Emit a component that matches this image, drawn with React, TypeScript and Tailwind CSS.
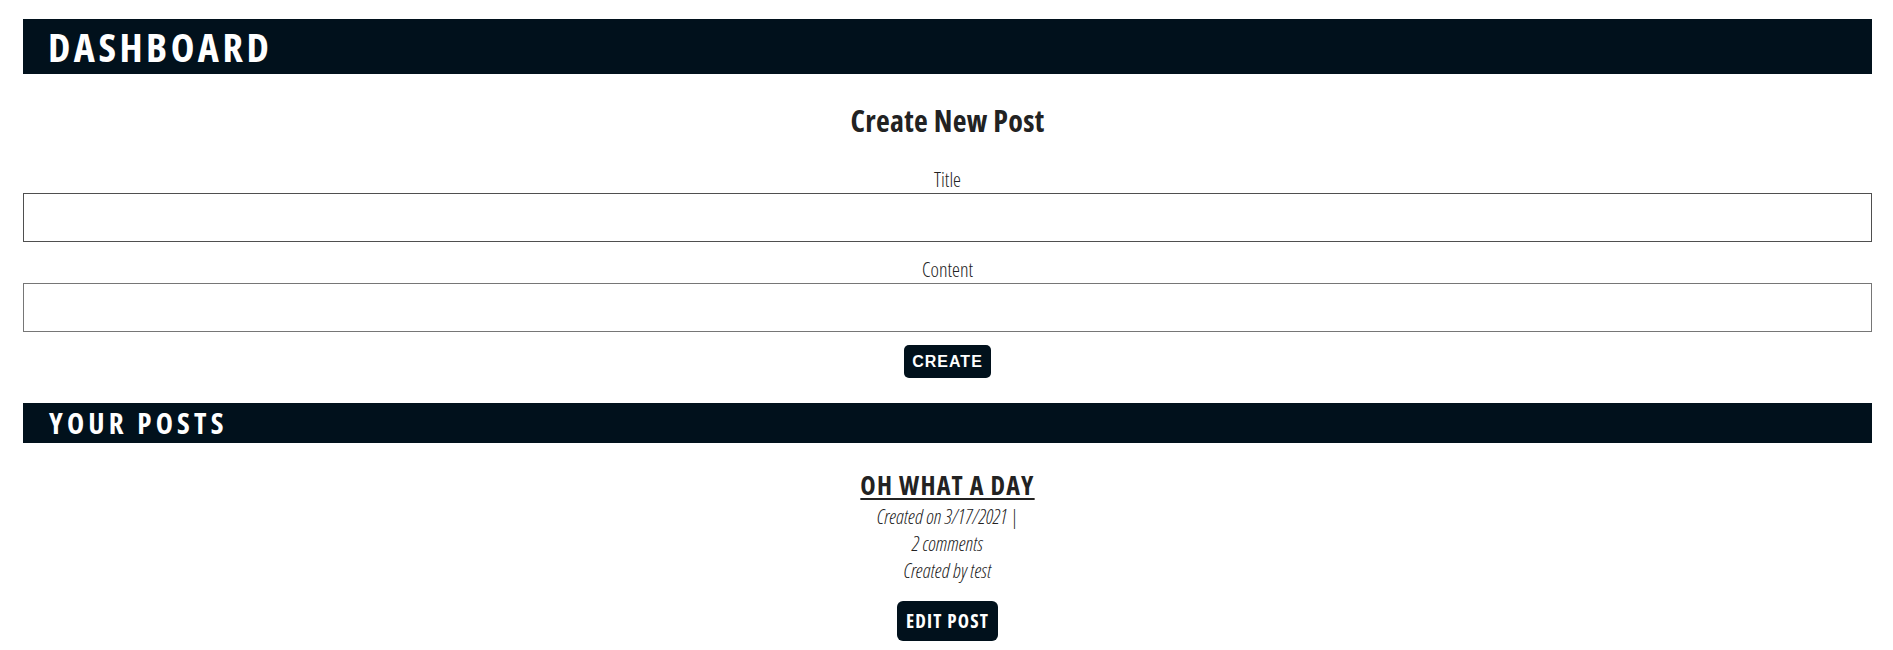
export default function App() {
  return (
    <div className="min-h-[650px] bg-white pl-[23px] pr-[21px] pt-[19px] text-[#222] font-['Open_Sans',sans-serif] font-stretch-condensed">
      <header className="flex h-[55px] items-center bg-[#01111c] pl-[25px]">
        <h1 className="text-[40px] leading-[55px] font-bold tracking-[3.5px] text-white">DASHBOARD</h1>
      </header>

      <section className="flex flex-col items-center">
        <h2 className="mt-[27px] text-[30px] leading-[40px] font-bold tracking-[0.3px]">Create New Post</h2>

        <form className="mt-[25px] flex w-full flex-col items-center">
          <label htmlFor="title" className="text-[20px] leading-[27px] font-light">
            Title
          </label>
          <input id="title" type="text" className="h-[49px] w-full border border-[#4f4f4f] outline-none" />

          <label htmlFor="content" className="mt-[14px] text-[20px] leading-[27px] font-light">
            Content
          </label>
          <input id="content" type="text" className="h-[49px] w-full border border-[#767676] outline-none" />

          <button
            type="button"
            className="mt-[13px] h-[33px] rounded-[5px] bg-[#01111c] px-[8px] font-['Liberation_Sans',Arial,sans-serif] text-[16px] font-bold tracking-[1px] text-white"
          >
            CREATE
          </button>
        </form>
      </section>

      <header className="mt-[25px] flex h-[40px] items-center bg-[#01111c] pl-[26px]">
        <h2 className="text-[29px] leading-[40px] font-bold tracking-[4.2px] text-white">YOUR POSTS</h2>
      </header>

      <article className="mt-[24px] flex flex-col items-center">
        <a href="#" className="text-[26px] leading-[36px] font-bold tracking-[1.2px] underline decoration-2 underline-offset-[3px]">
          OH WHAT A DAY
        </a>
        <p className="text-[20px] leading-[27px] font-light italic">Created on 3/17/2021 |</p>
        <p className="text-[20px] leading-[27px] font-light italic">2 comments</p>
        <p className="text-[20px] leading-[27px] font-light italic">Created by test</p>
        <button
          type="button"
          className="mt-[17px] h-[40px] rounded-[6px] bg-[#01111c] px-[9px] text-[19px] font-bold tracking-[1.2px] text-white"
        >
          EDIT POST
        </button>
      </article>
    </div>
  );
}
